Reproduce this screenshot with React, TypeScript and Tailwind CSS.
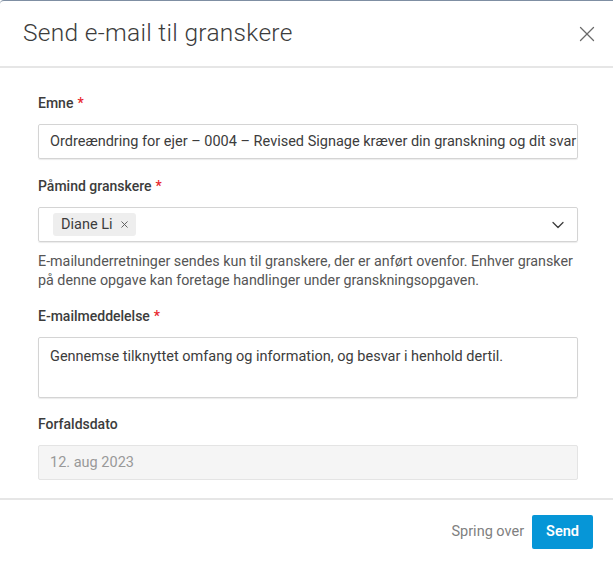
import React from 'react';
import { X, ChevronDown } from 'lucide-react';

const Label: React.FC<{ text: string; required?: boolean }> = ({ text, required }) => (
  <div className="text-[14px] font-medium text-[#3c3c3c] leading-5 mb-[11px]">
    {text}
    {required && <span className="text-[#e8262d] ml-1">*</span>}
  </div>
);

const App: React.FC = () => {
  return (
    <div
      className="w-[613px] h-[564px] bg-white flex flex-col border-t border-[#7f8fa3] rounded-tl-[4px] overflow-hidden"
      style={{ fontFamily: 'Roboto, "Noto Sans", sans-serif' }}
    >
      {/* Header */}
      <div className="h-[67px] flex items-center justify-between pl-[23px] pr-[19px] border-b-2 border-[#e6e6e6] shrink-0">
        <h1 className="text-[24.5px] font-light text-[#3c3c3c] tracking-[0.3px]">Send e-mail til granskere</h1>
        <button className="text-[#6a6a6a] -mr-[6px]" aria-label="Luk">
          <X size={26} strokeWidth={1.15} />
        </button>
      </div>

      {/* Body */}
      <div className="flex-1 pl-[38px] pr-[35px] pt-[25px] flex flex-col">
        <Label text="Emne" required />
        <div className="h-[35px] border border-[#d4d4d4] rounded-[2px] shadow-[0_1px_1px_rgba(0,0,0,0.08)] flex items-center px-[11px] overflow-hidden">
          <span className="text-[14.5px] text-[#3c3c3c] whitespace-nowrap">
            Ordreændring for ejer – 0004 – Revised Signage kræver din granskning og dit svar
          </span>
        </div>

        <div className="mt-[17px]">
          <Label text="Påmind granskere" required />
        </div>
        <div className="h-[35px] border border-[#d4d4d4] rounded-[2px] shadow-[0_1px_1px_rgba(0,0,0,0.08)] flex items-center pl-[14px] pr-[9px]">
          <div className="h-[23px] bg-[#eeeeee] rounded-[3px] flex items-center pl-[8px] pr-[6px] gap-[6px]">
            <span className="text-[14.5px] text-[#3c3c3c]">Diane Li</span>
            <X size={11} strokeWidth={2} className="text-[#555]" />
          </div>
          <div className="flex-1" />
          <ChevronDown size={20} strokeWidth={1.5} className="text-[#3c3c3c]" />
        </div>
        <p className="text-[14.3px] leading-[19px] text-[#555] mt-[10px] -mr-[2px]">
          E-mailunderretninger sendes kun til granskere, der er anført ovenfor. Enhver gransker på denne opgave kan foretage handlinger under granskningsopgaven.
        </p>

        <div className="mt-[16px]">
          <Label text="E-mailmeddelelse" required />
        </div>
        <div className="h-[61px] border border-[#d4d4d4] rounded-[2px] shadow-[0_1px_1px_rgba(0,0,0,0.08)] px-[11px] pt-[6px]">
          <span className="text-[14.5px] text-[#3c3c3c] leading-5">
            Gennemse tilknyttet omfang og information, og besvar i henhold dertil.
          </span>
        </div>

        <div className="mt-[16px]">
          <Label text="Forfaldsdato" />
        </div>
        <div className="h-[35px] border border-[#e4e4e4] bg-[#f5f5f5] rounded-[2px] flex items-center px-[11px]">
          <span className="text-[14.5px] text-[#999]">12. aug 2023</span>
        </div>
      </div>

      {/* Footer */}
      <div className="h-[66px] border-t-2 border-[#e6e6e6] flex items-center justify-end gap-[8px] pr-[20px] shrink-0">
        <button className="text-[14.5px] text-[#808080] px-0">Spring over</button>
        <button className="h-[34px] px-[14px] bg-[#0696d7] text-white text-[14.5px] font-semibold rounded-[2px]">Send</button>
      </div>
    </div>
  );
};

export default App;
